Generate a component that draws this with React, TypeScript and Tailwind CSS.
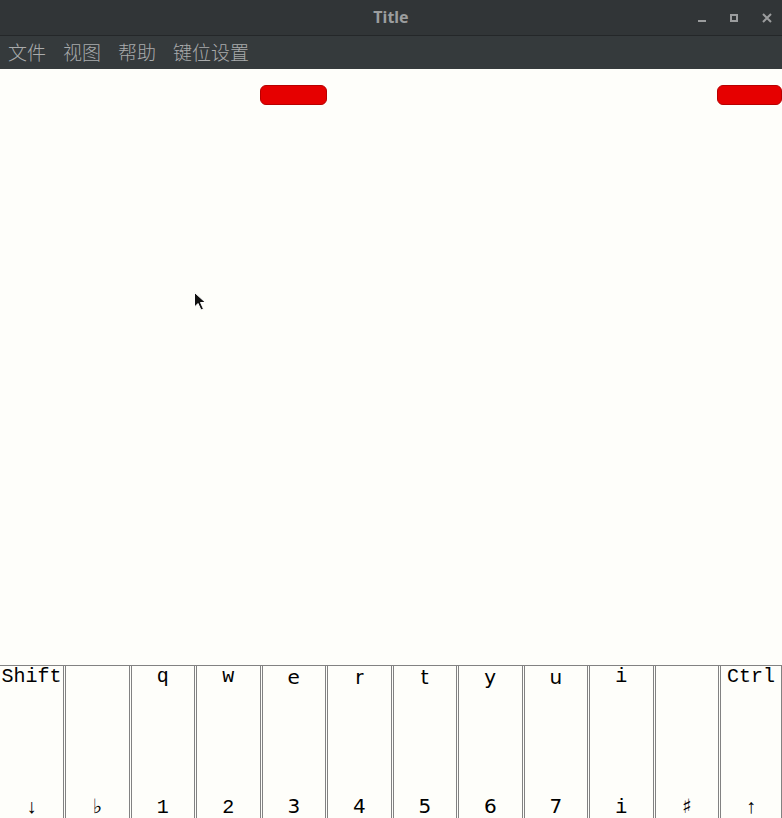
import React from "react";

type Key = { top: string; bottom: string; topMono?: boolean; bottomMono?: boolean };

const keys: Key[] = [
  { top: "Shift", bottom: "↓", topMono: true, bottomMono: true },
  { top: "", bottom: "♭" },
  { top: "q", bottom: "1", topMono: true, bottomMono: true },
  { top: "w", bottom: "2", topMono: true, bottomMono: true },
  { top: "e", bottom: "3" },
  { top: "r", bottom: "4" },
  { top: "t", bottom: "5" },
  { top: "y", bottom: "6" },
  { top: "u", bottom: "7" },
  { top: "i", bottom: "i", topMono: true, bottomMono: true },
  { top: "", bottom: "♯" },
  { top: "Ctrl", bottom: "↑", topMono: true, bottomMono: true },
];

const menus = ["文件", "视图", "帮助", "键位设置"];

const mono = "font-['Liberation_Mono','DejaVu_Sans_Mono',monospace]";
const sans = "font-['DejaVu_Sans','DejaVu_Sans_Mono',sans-serif]";

export default function App() {
  return (
    <div className="relative flex h-[818px] w-[782px] flex-col overflow-hidden bg-[#fefefa]">
      {/* title bar */}
      <div className="relative flex h-[36px] shrink-0 items-center justify-center border-b border-[#242729] bg-[#313537]">
        <span className="-mt-[1px] font-['Noto_Sans',sans-serif] text-[16px] font-bold text-[#9b9d9e]">Title</span>
        <div className="absolute right-[10px] top-0 flex h-full items-center gap-[24px] text-[#9b9d9e]">
          <span className="mt-[7px] block h-[2px] w-[8px] bg-[#9b9d9e]" />
          <span className="block h-[8px] w-[8px] border-2 border-[#9b9d9e]" />
          <svg width="10" height="10" viewBox="0 0 10 10">
            <path d="M1 1L9 9M9 1L1 9" stroke="#9b9d9e" strokeWidth="2" />
          </svg>
        </div>
      </div>

      {/* menu bar */}
      <div className="flex h-[33px] shrink-0 items-center gap-[17px] bg-[#353a3c] pb-[3px] pl-[8px]">
        {menus.map((m) => (
          <span key={m} className="font-['Noto_Sans_CJK_SC',sans-serif] text-[19px] font-light leading-none text-[#a9abac]">
            {m}
          </span>
        ))}
      </div>

      {/* canvas */}
      <div className="relative flex-1">
        <div className="flex pt-[16px]">
          <div className="ml-[260px] h-[20px] w-[67px] rounded-[6px] border border-[#b80000] bg-[#e60000]" />
          <div className="ml-auto h-[20px] w-[65px] rounded-[6px] border border-[#b80000] bg-[#e60000]" />
        </div>
        <svg className="absolute left-[193px] top-[222px]" width="15" height="21" viewBox="0 0 15 21">
          <path d="M1.5 1.5L1.5 16L5 12.5L8 19L10.5 18L7.5 11.5L12.5 11.5Z" fill="#111" stroke="#fff" strokeWidth="1" />
        </svg>
      </div>

      {/* keyboard */}
      <div className="grid h-[153px] shrink-0 grid-cols-[64px_repeat(10,65.5px)_1fr] border-t border-[#828282]">
        {keys.map((k, i) => (
          <div
            key={i}
            className={`flex flex-col items-center justify-between border-[#828282] ${i === 0 ? "border-r" : "ml-[1px] border-x"} text-[20px] text-black`}
          >
            <span className={`${k.topMono ? mono : sans} h-[22px] leading-[22px]`}>{k.top}</span>
            <span className={k.bottomMono ? `${mono} leading-[20px]` : `${sans} mb-[2px] leading-[20px]`}>{k.bottom}</span>
          </div>
        ))}
      </div>
    </div>
  );
}
